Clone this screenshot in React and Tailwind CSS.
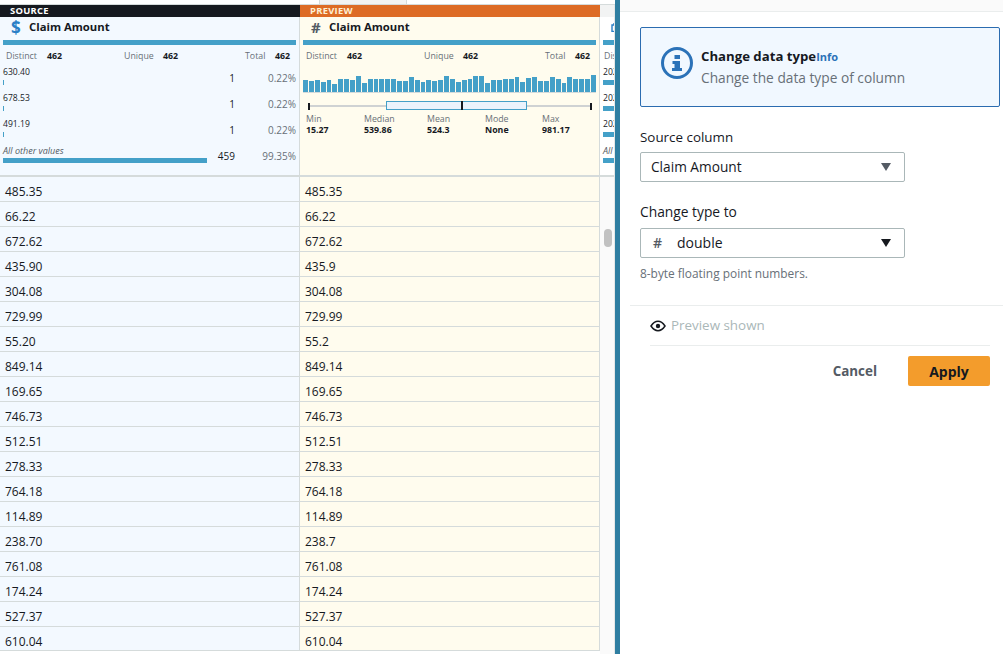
const rows = [
  ["485.35", "485.35"], ["66.22", "66.22"], ["672.62", "672.62"], ["435.90", "435.9"], ["304.08", "304.08"],
  ["729.99", "729.99"], ["55.20", "55.2"], ["849.14", "849.14"], ["169.65", "169.65"], ["746.73", "746.73"],
  ["512.51", "512.51"], ["278.33", "278.33"], ["764.18", "764.18"], ["114.89", "114.89"], ["238.70", "238.7"],
  ["761.08", "761.08"], ["174.24", "174.24"], ["527.37", "527.37"], ["610.04", "610.04"],
];

const bars = [12,11,12,10,12,8,13,13,12,16,9,13,13,13,13,13,11,11,15,12,10,12,11,12,16,13,10,12,13,16,16,9,12,12,13,13,15,10,14,15,11,11,15,13,9,15,13,13,13,17];

const font = { fontFamily: '"Open Sans", sans-serif' };

function Freq({ label, count, pct, wide, italic }) {
  return (
    <div className="flex h-[26px] items-start">
      <div className="min-w-0 flex-1">
        <div className={italic ? "h-[13px] text-[9px] italic leading-[13px] text-[#545b64]" : "h-[13px] text-[8.6px] leading-[13px] text-[#16191f]"}>{label}</div>
        <div className={wide ? "mt-[1px] h-[5px] w-[204px] bg-[#44a0c8]" : "mt-[1px] h-[5px] w-px bg-[#44a0c8]"} />
      </div>
      <div className="mt-[5px] w-[27px] text-right text-[10px] leading-[14px] text-[#16191f]">{count}</div>
      <div className="mt-[5px] w-[61px] text-right text-[10px] leading-[14px] text-[#687078]">{pct}</div>
    </div>
  );
}

function StatsRow() {
  return (
    <div className="flex pl-[6px] text-[8.8px] leading-[14px]">
      <div className="flex w-[118px]"><span className="w-[41px] text-[#687078]">Distinct</span><b className="text-[#16191f]">462</b></div>
      <div className="flex w-[121px]"><span className="w-[39px] text-[#687078]">Unique</span><b className="text-[#16191f]">462</b></div>
      <div className="flex w-[46px]"><span className="w-[30px] text-[#687078]">Total</span><b className="text-[#16191f]">462</b></div>
    </div>
  );
}

function Boxplot() {
  return (
    <div className="relative mx-[3px] mt-[8px] h-[9px] pt-[4px]">
      <div className="mx-[5px] h-[2px] bg-[#cfd2d3]" />
      <div className="absolute left-[5px] top-[2px] h-[7px] w-[2px] bg-[#16191f]" />
      <div className="absolute left-[83px] top-0 h-[9px] w-[141px] border border-[#44a0c8] bg-[#eaf3fc]" />
      <div className="absolute left-[158px] top-0 h-[9px] w-[2px] bg-[#16191f]" />
      <div className="absolute right-[4px] top-[2px] h-[7px] w-[2px] bg-[#16191f]" />
    </div>
  );
}

function Stat({ l, v, w }) {
  return (
    <div className={`${w} text-[8.8px] leading-[11px]`}>
      <div className="text-[#687078]">{l}</div>
      <div className="font-bold text-[#16191f]">{v}</div>
    </div>
  );
}

function Table({ idx, bg }) {
  return (
    <div className="w-full">
      {rows.map((r, i) => (
        <div key={i} className={`h-[25px] border-b border-r border-[#d5dbdb] pl-[5px] pt-[6px] text-[12px] leading-[17px] text-[#16191f] last:h-[24px] ${bg}`}>
          {r[idx]}
        </div>
      ))}
    </div>
  );
}

function Column({ bannerText, bannerClass, icon, bg, idx, children }) {
  return (
    <div className="flex w-[300px] shrink-0 flex-col">
      <div className={`h-[170px] w-[300px] border-r border-[#d5dbdb] ${bg}`}>
        <div className={`relative -mr-px h-[12px] pl-[10px] text-[9.4px] font-bold leading-[12px] tracking-[0.3px] ${bannerClass}`}>{bannerText}</div>
        <div className="flex h-[21px] items-center">
          {icon}
          <span className="text-[11.3px] font-bold text-[#16191f]">Claim Amount</span>
        </div>
        <div className="mx-[3px] mt-[2px] h-[5px] bg-[#44a0c8]" />
        <div className="mt-[4px]">
          <StatsRow />
          {children}
        </div>
      </div>
      <div className="h-[2px] bg-[#d5dbdb]" />
      <Table idx={idx} bg={bg} />
    </div>
  );
}

function ClippedRow({ text, italic }) {
  return (
    <div className="h-[26px]">
      <div className={italic ? "h-[13px] whitespace-nowrap text-[9px] italic leading-[13px] text-[#545b64]" : "h-[13px] whitespace-nowrap text-[8.6px] leading-[13px] text-[#16191f]"}>{text}</div>
      <div className="mt-[1px] h-[5px] w-[40px] bg-[#44a0c8]" />
    </div>
  );
}

export default function App() {
  return (
    <div className="flex h-[654px] w-[1003px] overflow-hidden bg-white" style={font}>
      <div className="flex h-full w-[615px] shrink-0 flex-col">
        <div className="flex h-[5px] shrink-0 border-b border-[#d5dbdb]">
          <div className="ml-[319px] h-[4px] w-[88px] border-x border-[#d5dbdb] bg-[#f2f3f3]" />
        </div>
        <div className="flex min-h-0 flex-1">
          <Column
            bannerText="SOURCE"
            bannerClass="bg-[#16191f] text-white"
            bg="bg-[#f3f9ff]"
            idx={0}
            icon={<span className="ml-[11px] mr-[9px] w-[9px] text-[17px] font-bold leading-none text-[#2b7fc6]">$</span>}
          >
            <div className="mt-[3px] px-[3px]">
              <Freq label="630.40" count="1" pct="0.22%" />
              <Freq label="678.53" count="1" pct="0.22%" />
              <Freq label="491.19" count="1" pct="0.22%" />
              <Freq label="All other values" count="459" pct="99.35%" wide italic />
            </div>
          </Column>
          <Column
            bannerText="PREVIEW"
            bannerClass="bg-[#dd6b25] text-[#fdf0d5]"
            bg="bg-[#fffcee]"
            idx={1}
            icon={<span className="ml-[11px] mr-[8px] w-[10px] text-[15px] font-bold leading-none text-[#545b64]">#</span>}
          >
            <div className="mx-[3px] mt-[4px] flex h-[26px] items-end gap-px border-b border-[#d5dbdb]">
              {bars.map((h, i) => (
                <div key={i} className="flex-1 bg-[#44a0c8]" style={{ height: h + "px" }} />
              ))}
            </div>
            <Boxplot />
            <div className="mt-[4px] flex pl-[6px]">
              <Stat l="Min" v="15.27" w="w-[58px]" />
              <Stat l="Median" v="539.86" w="w-[63px]" />
              <Stat l="Mean" v="524.3" w="w-[58px]" />
              <Stat l="Mode" v="None" w="w-[57px]" />
              <Stat l="Max" v="981.17" w="w-[50px]" />
            </div>
          </Column>
          <div className="relative min-w-0 flex-1 overflow-hidden border-r border-[#e5e7e7] bg-[#fafafa]">
            <div className="h-[170px] bg-white">
              <div className="h-[12px] bg-[#f2f3f3]" />
              <div className="flex h-[21px] items-center pl-[11px]">
                <svg width="10" height="9" viewBox="0 0 10 9" className="shrink-0">
                  <path d="M1 2h8v6.5H1zM3 0v2M7 0v2" fill="none" stroke="#2b7fc6" strokeWidth="1.4" />
                </svg>
              </div>
              <div className="ml-[3px] mt-[2px] h-[5px] bg-[#44a0c8]" />
              <div className="mt-[4px] pl-[4px] text-[8.8px] leading-[14px] text-[#687078]">Distinct</div>
              <div className="mt-[3px] pl-[3px]">
                <ClippedRow text="2021-01-01" />
                <ClippedRow text="2021-01-02" />
                <ClippedRow text="2021-01-03" />
                <ClippedRow text="All other values" italic />
              </div>
            </div>
            <div className="h-[2px] bg-[#d5dbdb]" />
            <div className="absolute left-[4px] top-[224px] h-[18px] w-[8px] rounded-full bg-[#c1c1c1]" />
          </div>
        </div>
      </div>
      <div className="w-[5px] shrink-0 bg-[#2f7ea1]" />
      <div className="flex min-w-0 flex-1 flex-col">
        <div className="h-[12px] border-b border-[#eaeded] bg-[#fafafa]" />
        <div className="pl-[20px] pr-[3px] pt-[15px]">
          <div className="flex h-[80px] items-start rounded-[2px] border border-[#2b6cb0] bg-[#f1f8ff] pl-[19px] pt-[18px]">
            <svg width="34" height="34" viewBox="0 0 34 34" className="mr-[7px] shrink-0">
              <circle cx="17" cy="17" r="14.5" fill="none" stroke="#2b72b8" strokeWidth="3" />
              <rect x="14.5" y="9" width="5.5" height="4" fill="#2b72b8" />
              <path d="M12.5 15H20v7h2v3H12v-3h2.5v-4h-2z" fill="#2b72b8" />
            </svg>
            <div>
              <div className="text-[13.2px] font-bold leading-[20px] text-[#16191f]">
                Change data type<span className="text-[11px] text-[#2b72b8]">Info</span>
              </div>
              <div className="mt-[1px] text-[13.73px] leading-[20px] text-[#687078]">Change the data type of column</div>
            </div>
          </div>
          <div className="mt-[20px] text-[13.4px] leading-[20px] text-[#16191f]">Source column</div>
          <div className="mt-[5px] flex h-[30px] w-[265px] items-center justify-between rounded-[2px] border border-[#aab7b8] pl-[10px] pr-[13px] text-[13.7px] text-[#16191f]">
            <span>Claim Amount</span>
            <svg width="10" height="8" viewBox="0 0 10 8"><path d="M0 0h10L5 8z" fill="#545b64" /></svg>
          </div>
          <div className="mt-[20px] text-[13.8px] leading-[20px] text-[#16191f]">Change type to</div>
          <div className="mt-[6px] flex h-[30px] w-[265px] items-center rounded-[2px] border border-[#aab7b8] pl-[12px] pr-[13px] text-[14px] text-[#16191f]">
            <span className="-mt-[2px] w-[24px] text-[14px] font-semibold text-[#545b64]">#</span>
            <span className="-mt-[2px] flex-1">double</span>
            <svg width="10" height="8" viewBox="0 0 10 8"><path d="M0 0h10L5 8z" fill="#16191f" /></svg>
          </div>
          <div className="mt-[6px] text-[11.9px] leading-[18px] text-[#687078]">8-byte floating point numbers.</div>
        </div>
        <div className="ml-[10px] mt-[23px] border-t border-[#eaeded] pl-[20px] pr-[13px]">
          <div className="flex h-[40px] items-center border-b border-[#eaeded] text-[13.4px] text-[#aab7b8]">
            <svg width="16" height="12" viewBox="0 0 16 12" className="mr-[5px]">
              <path d="M1 6c2-3 4.3-4.7 7-4.7S13 3 15 6c-2 3-4.3 4.7-7 4.7S3 9 1 6z" fill="none" stroke="#16191f" strokeWidth="1.5" />
              <circle cx="8" cy="6" r="2.2" fill="#16191f" />
            </svg>
            Preview shown
          </div>
          <div className="mt-[10px] flex items-center justify-end">
            <span className="mr-[31px] text-[13.4px] font-bold text-[#545b64]">Cancel</span>
            <div className="flex h-[30px] w-[82px] items-center justify-center rounded-[2px] bg-[#f39c2c] text-[14px] font-bold text-[#16191f]">Apply</div>
          </div>
        </div>
      </div>
    </div>
  );
}
